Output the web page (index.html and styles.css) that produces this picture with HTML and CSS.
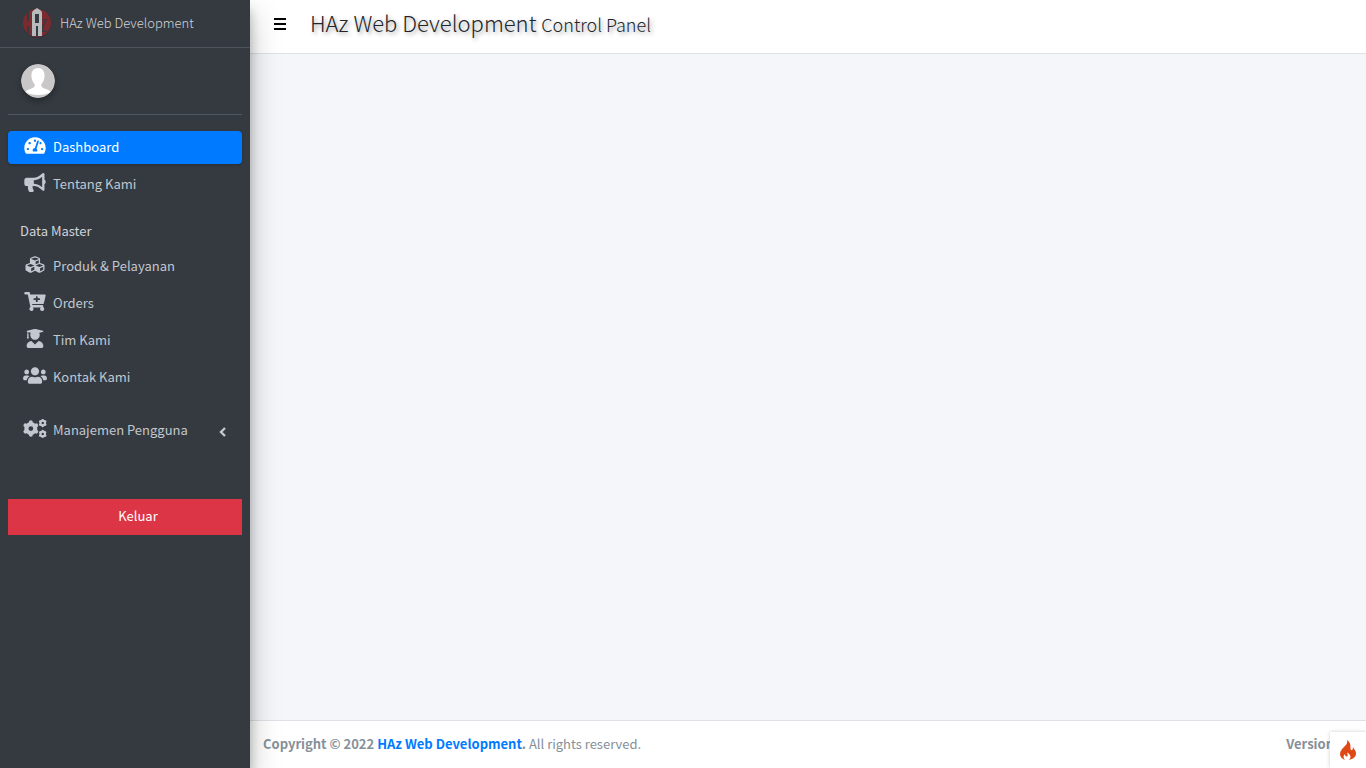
FILE: index.html
```html
<!DOCTYPE html>
<html lang="id">
<head>
<meta charset="utf-8">
<meta name="viewport" content="width=device-width, initial-scale=1">
<title>HAz Web Development</title>
<link rel="stylesheet" href="styles.css">
</head>
<body>
<div class="wrapper">
  <aside class="sidebar">
    <a class="brand" href="#">
      <svg class="brand-logo" viewBox="0 0 30 30" aria-hidden="true">
        <circle cx="15" cy="16" r="14" fill="#2f3338"/>
        <circle cx="15" cy="15" r="14" fill="#7b2b30"/>
        <path fill="#343a40" d="M5 4h2v9H5zM5 18h2v9H5zM20 11h5l-4 9v3h4v1h-6v-4l4-8h-3z"/>
        <path fill="#b9babb" fill-rule="evenodd" d="M10 28V5q0-2 2-3l3-2 3 2q2 1 2 3v23h-4v-10h-2v10zM13 6v9h4V6z"/>
        <path fill="#343a40" d="M13 6h4v9h-4zM14 18h2v10h-2z"/>
      </svg>
      <span>HAz Web Development</span>
    </a>
    <div class="sidebar-body">
      <div class="user-panel">
        <svg class="avatar" viewBox="0 0 34 34" role="img" aria-label="User">
          <circle cx="17" cy="17" r="17" fill="#c9c7c8"/>
          <path fill="#fff" d="M17 4c-5 0-7 4-6.500 9 .3 3 1.500 5 3 7 .8 2-.5 3.500-3 4.500-3 1-5 1.500-6 3.500Q9 31 17 31t12.500-3c-1-2-3-2.500-6-3.500-2.500-1-3.800-2.500-3-4.500 1.500-2 2.700-4 3-7C24 8 22 4 17 4z"/>
        </svg>
      </div>
      <nav class="menu">
        <a class="menu-link active" href="#">
          <svg class="icon" viewBox="0 0 576 512" aria-hidden="true"><path d="M288 32C128.940 32 0 160.940 0 320c0 52.800 14.250 102.260 39.060 144.800 5.610 9.620 16.300 15.200 27.440 15.200h443c11.140 0 21.830-5.580 27.440-15.200C561.750 422.260 576 372.800 576 320c0-159.060-128.940-288-288-288zm0 64c14.710 0 26.580 10.130 30.320 23.650-1.110 2.260-2.640 4.230-3.450 6.670l-9.220 27.670c-5.130 3.490-10.970 6.010-17.640 6.010-17.670 0-32-14.330-32-32S270.330 96 288 96zM96 384c-17.670 0-32-14.330-32-32s14.330-32 32-32 32 14.330 32 32-14.330 32-32 32zm48-160c-17.670 0-32-14.330-32-32s14.330-32 32-32 32 14.330 32 32-14.330 32-32 32zm246.770-72.410l-61.330 184C343.130 347.330 352 364.540 352 384c0 11.720-3.380 22.550-8.880 32H232.880c-5.500-9.450-8.880-20.280-8.880-32 0-33.940 26.500-61.430 59.900-63.590l61.340-184.010c4.170-12.560 17.730-19.450 30.360-15.170 12.570 4.190 19.350 17.790 15.170 30.360zm14.660 57.200l15.520-46.550c3.470-1.290 7.130-2.230 11.050-2.230 17.670 0 32 14.330 32 32s-14.330 32-32 32c-11.380-.01-20.890-6.280-26.570-15.220zM480 384c-17.670 0-32-14.330-32-32s14.330-32 32-32 32 14.330 32 32-14.330 32-32 32z"/></svg>
          <span>Dashboard</span>
        </a>
        <a class="menu-link" href="#">
          <svg class="icon" viewBox="0 0 576 512" aria-hidden="true"><path d="M576 240c0-23.630-12.950-44.040-32-55.120V32.010C544 23.260 537.020 0 512 0c-7.120 0-14.190 2.380-19.980 7.020l-85.030 68.030C364.280 109.190 310.660 128 256 128H64c-35.350 0-64 28.650-64 64v96c0 35.350 28.650 64 64 64h33.700c-1.390 10.480-2.180 21.140-2.180 32 0 39.770 9.260 77.350 25.560 110.940 5.190 10.690 16.520 17.060 28.400 17.060h74.280c26.050 0 41.690-29.840 25.900-50.560-16.400-21.520-26.150-48.360-26.150-77.440 0-11.110 1.620-21.790 4.410-32H256c54.660 0 108.280 18.810 150.980 52.950l85.030 68.030a32 32 0 0 0 19.980 7.020c24.920 0 32-22.780 32-32V295.130C563.050 284.040 576 263.630 576 240zm-96 141.420l-33.050-26.440C392.950 311.780 325.120 288 256 288v-96c69.120 0 136.950-23.780 190.950-66.980L480 98.580v282.840z"/></svg>
          <span>Tentang Kami</span>
        </a>
        <h2 class="menu-header">Data Master</h2>
        <a class="menu-link" href="#">
          <svg class="icon" viewBox="0 0 512 512" aria-hidden="true"><path d="M488.600 250.200L392 214V105.500c0-15-9.300-28.400-23.400-33.700l-100-37.500c-8.100-3.100-17.100-3.100-25.300 0l-100 37.500c-14.100 5.300-23.400 18.700-23.400 33.700V214l-96.600 36.200C9.300 255.500 0 268.900 0 283.900V394c0 13.600 7.700 26.100 19.900 32.200l100 50c10.100 5.100 22.100 5.100 32.200 0l103.900-52 103.900 52c10.100 5.100 22.100 5.100 32.200 0l100-50c12.200-6.100 19.900-18.600 19.900-32.200V283.900c0-15-9.300-28.400-23.400-33.700zM358 214.800l-85 31.900v-68.200l85-37v73.300zM154 104.100l102-38.200 102 38.200v.6l-102 41.400-102-41.400v-.6zm84 291.100l-85 42.500v-79.100l85-38.800v75.400zm0-112l-102 41.400-102-41.400v-.6l102-38.200 102 38.200v.6zm240 112l-85 42.500v-79.100l85-38.800v75.400zm0-112l-102 41.400-102-41.400v-.6l102-38.200 102 38.200v.6z"/></svg>
          <span>Produk &amp; Pelayanan</span>
        </a>
        <a class="menu-link" href="#">
          <svg class="icon" viewBox="0 0 576 512" aria-hidden="true"><path d="M504.717 320H211.572l6.545 32h268.418c15.401 0 26.816 14.301 23.403 29.319l-5.517 24.276C523.112 414.668 536 433.828 536 456c0 31.202-25.519 56.444-56.824 55.994-29.823-.429-54.350-24.631-55.155-54.447-.44-16.287 6.085-31.049 16.803-41.548H231.176C241.553 426.165 248 440.326 248 456c0 31.813-26.528 57.431-58.670 55.938-28.540-1.325-51.751-24.385-53.251-52.917-1.158-22.034 10.436-41.455 28.051-51.586L93.883 64H24C10.745 64 0 53.255 0 40V24C0 10.745 10.745 0 24 0h102.529c11.401 0 21.228 8.021 23.513 19.190L159.208 64H551.990c15.401 0 26.816 14.301 23.403 29.319l-47.273 208C525.637 312.246 515.923 320 504.717 320zM408 168h-48v-40c0-8.837-7.163-16-16-16h-16c-8.837 0-16 7.163-16 16v40h-48c-8.837 0-16 7.163-16 16v16c0 8.837 7.163 16 16 16h48v40c0 8.837 7.163 16 16 16h16c8.837 0 16-7.163 16-16v-40h48c8.837 0 16-7.163 16-16v-16c0-8.837-7.163-16-16-16z"/></svg>
          <span>Orders</span>
        </a>
        <a class="menu-link" href="#">
          <svg class="icon" viewBox="0 0 448 512" aria-hidden="true"><path d="M319.400 320.600L224 416l-95.400-95.400C57.100 323.700 0 382.200 0 454.400v9.600c0 26.500 21.500 48 48 48h352c26.500 0 48-21.500 48-48v-9.600c0-72.200-57.100-130.700-128.600-133.800zM13.600 79.800l6.400 1.500v58.400c-7 4.200-12 11.500-12 20.300 0 8.400 4.600 15.400 11.100 19.700L3.500 242c-1.700 6.900 2.100 14 7.600 14h41.800c5.500 0 9.300-7.100 7.600-14l-15.600-62.300C51.400 175.400 56 168.400 56 160c0-8.800-5-16.100-12-20.300V87.100l66 15.900c-8.600 17.200-14 36.400-14 57 0 70.700 57.300 128 128 128s128-57.300 128-128c0-20.600-5.300-39.800-14-57l96.300-23.200c18.200-4.400 18.200-27.100 0-31.500l-190.400-46c-13-3.100-26.700-3.100-39.700 0L13.600 48.200c-18.100 4.400-18.100 27.200 0 31.600z"/></svg>
          <span>Tim Kami</span>
        </a>
        <a class="menu-link" href="#">
          <svg class="icon" viewBox="0 0 640 512" aria-hidden="true"><path d="M96 224c35.300 0 64-28.700 64-64s-28.700-64-64-64-64 28.700-64 64 28.700 64 64 64zm448 0c35.300 0 64-28.700 64-64s-28.700-64-64-64-64 28.700-64 64 28.700 64 64 64zm32 32h-64c-17.600 0-33.500 7.100-45.100 18.600 40.300 22.100 68.900 62 75.100 109.400h66c17.700 0 32-14.300 32-32v-32c0-35.300-28.700-64-64-64zm-256 0c61.900 0 112-50.100 112-112S381.900 32 320 32 208 82.100 208 144s50.100 112 112 112zm76.800 32h-8.300c-20.800 10-43.900 16-68.500 16s-47.600-6-68.500-16h-8.300C179.600 288 128 339.600 128 403.200V432c0 26.500 21.500 48 48 48h288c26.500 0 48-21.500 48-48v-28.800c0-63.600-51.600-115.200-115.200-115.200zm-223.700-13.400C161.500 263.100 145.600 256 128 256H64c-35.300 0-64 28.700-64 64v32c0 17.700 14.300 32 32 32h65.900c6.300-47.400 34.900-87.300 75.200-109.400z"/></svg>
          <span>Kontak Kami</span>
        </a>
        <a class="menu-link menu-group" href="#">
          <svg class="icon" viewBox="0 0 640 512" aria-hidden="true">
            <g fill="none" stroke="currentColor">
              <circle cx="208" cy="256" r="120" stroke-width="112"/>
              <path stroke-width="104" stroke-linecap="round" d="M208 86v30M208 396v30M62 171l26 15M328 326l26 15M62 341l26-15M328 186l26-15"/>
              <circle cx="528" cy="108" r="62" stroke-width="58"/>
              <path stroke-width="56" stroke-linecap="round" d="M528 22v16M528 178v16M456 64l14 8M586 144l14 8M456 152l14-8M586 72l14-8"/>
              <circle cx="528" cy="404" r="62" stroke-width="58"/>
              <path stroke-width="56" stroke-linecap="round" d="M528 318v16M528 474v10M456 360l14 8M586 440l14 8M456 448l14-8M586 368l14-8"/>
            </g>
          </svg>
          <span>Manajemen Pengguna</span>
          <svg class="chevron" viewBox="0 0 8 10" aria-hidden="true"><path d="M6 1L2 5l4 4" fill="none" stroke="currentColor" stroke-width="2.400"/></svg>
        </a>
        <a class="logout" href="#">Keluar</a>
      </nav>
    </div>
  </aside>
  <div class="page">
    <header class="topbar">
      <button class="toggle" type="button" aria-label="Menu">
        <svg viewBox="0 0 12 12" aria-hidden="true"><path d="M0 0h12v2H0zM0 5h12v2H0zM0 10h12v2H0z"/></svg>
      </button>
      <h1 class="title">HAz Web Development <small>Control Panel</small></h1>
    </header>
    <main class="content"></main>
    <footer class="footer">
      <div><strong>Copyright © 2022 <a href="#">HAz Web Development</a>.</strong> All rights reserved.</div>
      <strong class="version">Version</strong>
    </footer>
  </div>
  <button class="debug" type="button" aria-label="Debug toolbar">
    <svg viewBox="0 0 16 20" aria-hidden="true"><path fill="#dd4814" d="M7 0c1 3-1 5-3 7-2 2-4 4-4 7 0 3 2 5 5 6-2-2-2-4 0-6 0 1.500.5 2.500 1.500 2.500 2 0 1-2.500.5-4 2 1 3.500 2.500 3.500 4.500 0 1-.5 2-1.500 3 4-1 7-3 7-6.500 0-3-2-4-3-6.500-.5 1 0 2-.5 2.800-.8 1-2 .2-2-1C10.500 6 11 3 7 0z"/></svg>
  </button>
</div>
</body>
</html>
```
FILE: styles.css
```css
* { box-sizing: border-box; }

body {
  margin: 0;
  font-family: "Source Sans Pro", "Noto Sans CJK SC", "Noto Sans", sans-serif;
  font-size: 13px;
  line-height: 20px;
  color: #212529;
  background: #f4f6f9;
}

a { color: inherit; text-decoration: none; }

.wrapper { display: flex; min-height: 100vh; }

.sidebar {
  position: relative;
  z-index: 2;
  flex: 0 0 250px;
  color: #c2c7d0;
  background: #343a40;
  box-shadow: 0 14px 28px rgba(0, 0, 0, .25), 0 10px 10px rgba(0, 0, 0, .22);
}

.brand {
  display: flex;
  align-items: center;
  gap: 8px;
  height: 48px;
  padding: 0 22px 2px;
  font-weight: 300;
  color: #d2d4d7;
  border-bottom: 1px solid #4b545c;
}

.brand-logo { width: 30px; height: 30px; }

.sidebar-body { padding: 0 8px; }

.user-panel {
  padding: 16px 13px;
  border-bottom: 1px solid #4f5962;
}

.avatar {
  display: block;
  width: 34px;
  height: 34px;
  border-radius: 50%;
  box-shadow: 0 3px 6px rgba(0, 0, 0, .3);
}

.menu {
  display: flex;
  flex-direction: column;
  gap: 4px;
  padding-top: 16px;
}

.menu-link {
  display: flex;
  align-items: center;
  gap: 6px;
  height: 33px;
  padding: 0 15px 2px;
  border-radius: 4px;
}

.menu-link.active {
  color: #fff;
  background: #007bff;
  box-shadow: 0 1px 3px rgba(0, 0, 0, .24);
}

.icon {
  width: 24px;
  height: 19px;
  margin-bottom: 3px;
  fill: currentColor;
}

.menu-header {
  margin: 0;
  padding: 16px 12px 5px;
  font-size: 13px;
  font-weight: 400;
  line-height: 20px;
  color: #d0d4db;
}

.menu-group { margin-top: 16px; }

.chevron { width: 8px; height: 10px; margin: 4px 0 0 auto; }

.logout {
  margin-top: 48px;
  padding: 7px 0 9px 26px;
  color: #fff;
  text-align: center;
  background: #dc3545;
}

.page {
  display: flex;
  flex: 1;
  flex-direction: column;
  min-width: 0;
}

.topbar {
  display: flex;
  align-items: center;
  gap: 24px;
  height: 54px;
  padding: 0 24px 8px;
  background: #fff;
  border-bottom: 1px solid #dee2e6;
}

.toggle {
  padding: 2px 0 0;
  border: 0;
  background: none;
}

.toggle svg { display: block; width: 12px; height: 12px; }

.title {
  margin: 0;
  font-size: 22px;
  font-weight: 300;
  line-height: 28px;
  text-shadow: 2px 2px 4px #999;
}

.title small { font-size: 18px; }

.content { flex: 1; }

.footer {
  display: flex;
  justify-content: space-between;
  height: 48px;
  padding: 13px 32px 14px 13px;
  color: #869099;
  background: #fff;
  border-top: 1px solid #dee2e6;
}

.footer a { color: #007bff; }

.debug {
  position: fixed;
  right: 0;
  bottom: 0;
  z-index: 3;
  width: 36px;
  height: 36px;
  padding: 0 0 0 10px;
  border: 0;
  background: #fff;
  box-shadow: 0 0 4px rgba(0, 0, 0, .2);
}

.debug svg { display: block; width: 16px; height: 20px; }
```
